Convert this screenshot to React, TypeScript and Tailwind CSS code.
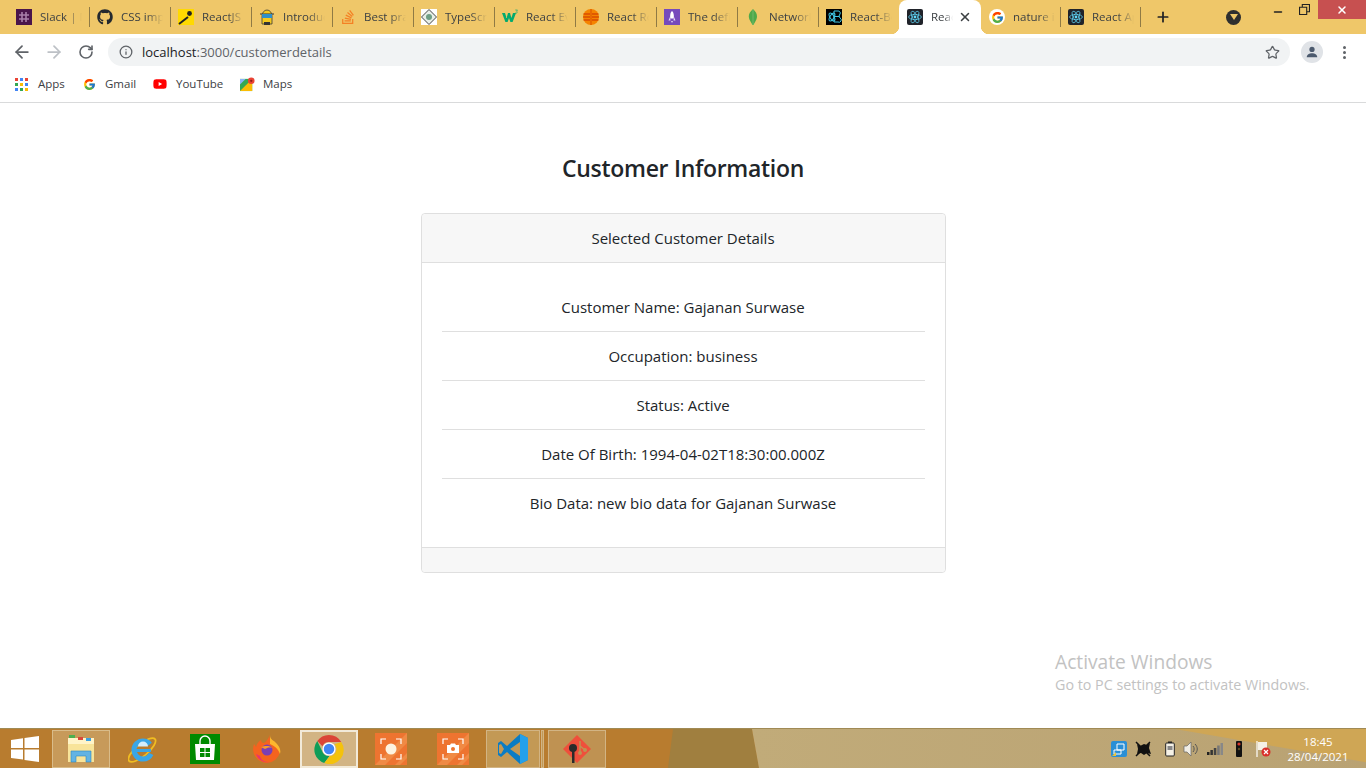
import { ReactNode } from "react";
import { FaGithub, FaStackOverflow, FaYoutube } from "react-icons/fa";
import { FcGoogle } from "react-icons/fc";
import { X, Plus, ArrowLeft, ArrowRight, RotateCw, Info, Star, Minus } from "lucide-react";

const ReactFav = () => (
  <svg viewBox="0 0 16 16" className="h-4 w-4">
    <rect width="16" height="16" rx="2" fill="#20232a" />
    <circle cx="8" cy="8" r="1.4" fill="#61dafb" />
    <g fill="none" stroke="#61dafb" strokeWidth="0.7">
      <ellipse cx="8" cy="8" rx="6.4" ry="2.6" />
      <ellipse cx="8" cy="8" rx="6.4" ry="2.6" transform="rotate(60 8 8)" />
      <ellipse cx="8" cy="8" rx="6.4" ry="2.6" transform="rotate(120 8 8)" />
    </g>
  </svg>
);

function GoogleFav() {
  return (
    <span className="flex h-4 w-4 items-center justify-center rounded-full bg-white">
      <FcGoogle className="h-[13px] w-[13px]" />
    </span>
  );
}

const tabs: { title: string; icon: ReactNode }[] = [
  {
    title: "Slack | New message",
    icon: (
      <svg viewBox="0 0 16 16" className="h-4 w-4">
        <rect width="16" height="16" fill="#4a154b" />
        <path d="M6 3v10M10 3v10M3 6h10M3 10h10" stroke="#a97fab" strokeWidth="1.6" />
      </svg>
    ),
  },
  { title: "CSS import", icon: <FaGithub className="h-4 w-4 text-[#24292e]" /> },
  {
    title: "ReactJS tutorial",
    icon: (
      <svg viewBox="0 0 16 16" className="h-4 w-4">
        <rect width="16" height="16" fill="#ffd900" />
        <path d="M1 15l9-7" stroke="#222" strokeWidth="2" />
        <circle cx="11.5" cy="4.5" r="2.4" fill="#222" />
      </svg>
    ),
  },
  {
    title: "Introduction",
    icon: (
      <svg viewBox="0 0 16 16" className="h-4 w-4">
        <path d="M3 7a5 6 0 0 1 10 0v8H3z" fill="#f3c81f" stroke="#3a3a3a" strokeWidth="0.8" />
        <path d="M1 5h14" stroke="#333" strokeWidth="1" />
        <rect x="3" y="5" width="10" height="4" fill="#2f8fc9" />
        <path d="M5 13h6v3H5z" fill="#333" />
      </svg>
    ),
  },
  { title: "Best practices", icon: <FaStackOverflow className="h-4 w-4 text-[#f48024]" /> },
  {
    title: "TypeScript",
    icon: (
      <svg viewBox="0 0 16 16" className="h-4 w-4">
        <rect width="16" height="16" fill="#fff" />
        <path d="M8 .5 15.500 8 8 15.500.5 8z" fill="#e8efe8" stroke="#444" strokeWidth="1" />
        <circle cx="8" cy="8" r="3" fill="#6f9f85" />
      </svg>
    ),
  },
  {
    title: "React Events",
    icon: (
      <svg viewBox="0 0 16 16" className="h-4 w-4">
        <path d="M0 4h3l1.600 5L6 4h2l1.400 5L11 4h3l-3.400 9H8.400L7 9l-1.400 4H3.400z" fill="#04aa6d" />
        <path d="M13.200 1h2.300l-1 1.300a.9.9 0 1 1-1 1.300" fill="none" stroke="#04aa6d" strokeWidth="0.6" />
      </svg>
    ),
  },
  {
    title: "React Router",
    icon: (
      <svg viewBox="0 0 16 16" className="h-4 w-4">
        <circle cx="8" cy="8" r="8" fill="#f58400" />
        <path d="M0.600 5h14.800M0.200 8h15.600M0.600 11h14.800" stroke="#d94c00" strokeWidth="1.400" />
        <path d="M8 0v16" stroke="#e86a00" strokeWidth="2" />
      </svg>
    ),
  },
  {
    title: "The definitive",
    icon: (
      <svg viewBox="0 0 16 16" className="h-4 w-4">
        <rect width="16" height="16" fill="#764abc" />
        <path d="M8 2c1.800 1.500 2 4 1.800 7.500H6.200C6 6 6.200 3.500 8 2z" fill="#fff" />
        <path d="M6 8 4.500 11.500H6.500M10 8l1.500 3.500H9.500M7 12h2l-1 2z" fill="#e6dcf5" />
      </svg>
    ),
  },
  {
    title: "Network",
    icon: (
      <svg viewBox="0 0 16 16" className="h-4 w-4">
        <path d="M8 0c2.800 2.600 4.200 5 4 8-.2 3.400-2.600 5.400-3.500 8h-1C6.600 13.400 4 11.400 3.800 8 3.600 5 5.200 2.600 8 0z" fill="#4fa94a" />
        <path d="M8 1v15" stroke="#8bc27f" strokeWidth="0.6" />
      </svg>
    ),
  },
  {
    title: "React-Bootstrap",
    icon: (
      <svg viewBox="0 0 16 16" className="h-4 w-4">
        <rect width="16" height="16" fill="#000" />
        <g fill="none" stroke="#41c7e6" strokeWidth="1">
          <ellipse cx="6" cy="8" rx="4.500" ry="2" transform="rotate(60 6 8)" />
          <ellipse cx="6" cy="8" rx="4.500" ry="2" transform="rotate(120 6 8)" />
          <path d="M8 2h4a2 2 0 0 1 2 3l-1 2 1 2a2 2 0 0 1-2 4H8zM8 7.500h5" />
        </g>
      </svg>
    ),
  },
];

const Tab = ({ title, icon, width = "w-[81px]" }: { title: string; icon: ReactNode; width?: string }) => (
  <div className={`flex h-[34px] shrink-0 items-center pl-[8px] ${width}`}>
    {icon}
    <span className="ml-[8px] w-[42px] overflow-hidden whitespace-nowrap text-[11.5px] text-[#3c4043] [mask-image:linear-gradient(to_right,black_60%,transparent)]">
      {title}
    </span>
    <span className="ml-auto mr-[-1px] h-[20px] w-px bg-[#8f7a45]" />
  </div>
);

const Chrome = ({ size }: { size: string }) => (
  <svg viewBox="0 0 32 32" className={size}>
    <path d="M16 1a15 15 0 0 1 13 7.500H16a7.500 7.500 0 0 0-7 4.500L3.500 7.500A15 15 0 0 1 16 1z" fill="#db4437" />
    <path d="M3.500 7.500 9.500 20a7.500 7.500 0 0 0 7 3.500L11 31A15 15 0 0 1 3.500 7.500z" fill="#0f9d58" />
    <path d="M29 8.500A15 15 0 0 1 11 31l6-7.500a7.500 7.500 0 0 0 5-12.500L29 8.500z" fill="#f4c20d" />
    <circle cx="16" cy="16" r="7" fill="#fff" />
    <circle cx="16" cy="16" r="5.600" fill="#4285f4" />
  </svg>
);

const OrangeTile = ({ children }: { children: ReactNode }) => (
  <svg viewBox="0 0 32 32" className="h-[32px] w-[32px]">
    <rect width="32" height="32" fill="#ee7430" />
    <path d="M0 32 32 0v10L10 32zM20 32 32 20v5l-7 7z" fill="#f08a44" />
    <path d="M6 11V6h5M21 6h5v5M26 21v5h-5M11 26H6v-5" fill="none" stroke="#fff" strokeWidth="1.200" />
    {children}
  </svg>
);

const rows = [
  "Customer Name: Gajanan Surwase",
  "Occupation: business",
  "Status: Active",
  "Date Of Birth: 1994-04-02T18:30:00.000Z",
  "Bio Data: new bio data for Gajanan Surwase",
];

const TaskSlot = ({ children, className = "" }: { children: ReactNode; className?: string }) => (
  <div className={`flex h-full shrink-0 items-center justify-center ${className}`}>{children}</div>
);

export default function App() {
  return (
    <div
      className="relative flex h-[768px] w-[1366px] flex-col overflow-hidden bg-white text-[#212529]"
      style={{ fontFamily: '"Open Sans", "Noto Sans", sans-serif' }}
    >
      {/* tab strip */}
      <div className="flex h-[34px] shrink-0 items-center bg-[#efc769] pl-[8px]">
        {tabs.map((t) => (
          <Tab key={t.title} title={t.title} icon={t.icon} />
        ))}
        <div className="relative flex h-[34px] w-[82px] shrink-0 items-center rounded-t-[8px] bg-white pl-[8px]">
          <span className="absolute bottom-0 left-[-8px] h-[8px] w-[8px] bg-[radial-gradient(circle_at_0_0,#efc769_8px,#ffffff_8.500px)]" />
          <span className="absolute bottom-0 right-[-8px] h-[8px] w-[8px] bg-[radial-gradient(circle_at_100%_0,#efc769_8px,#ffffff_8.500px)]" />
          <ReactFav />
          <span className="ml-[8px] w-[22px] overflow-hidden whitespace-nowrap text-[11.5px] text-[#3c4043] [mask-image:linear-gradient(to_right,black_60%,transparent)]">
            React App
          </span>
          <X className="ml-[5px] h-[14px] w-[14px] text-[#3c4043]" strokeWidth={2.6} />
        </div>
        <Tab title="nature images" icon={<GoogleFav />} width="w-[79px]" />
        <Tab title="React App" icon={<ReactFav />} width="w-[80px]" />
        <Plus className="ml-[15px] h-[16px] w-[16px] text-[#202124]" strokeWidth={2.6} />
        <span className="ml-[55px] flex h-[15px] w-[15px] items-center justify-center rounded-full bg-[#2f2f2f]">
          <svg viewBox="0 0 8 6" className="h-[6px] w-[8px]">
            <path d="M0 0h8L4 6z" fill="#efc769" />
          </svg>
        </span>
        <div className="ml-auto flex h-[34px] items-start self-start">
          <Minus className="mt-[6px] mr-[15px] h-[12px] w-[12px] text-[#222]" strokeWidth={3} />
          <svg viewBox="0 0 10 10" className="mt-[4px] mr-[8px] h-[11px] w-[11px]">
            <path d="M.5 3h6.500v6.500H.5zM3 3V.5h6.500V7H7" fill="none" stroke="#222" strokeWidth="1" />
          </svg>
          <div className="flex h-[19px] w-[48px] items-center justify-center bg-[#c75050]">
            <X className="h-[12px] w-[12px] text-white" strokeWidth={3} />
          </div>
        </div>
      </div>

      {/* toolbar */}
      <div className="flex h-[34px] shrink-0 items-center bg-white pl-[12px] pt-[2px]">
        <ArrowLeft className="h-[20px] w-[20px] text-[#5f6368]" strokeWidth={2.1} />
        <ArrowRight className="ml-[12px] h-[20px] w-[20px] text-[#bdc1c6]" strokeWidth={2.1} />
        <RotateCw className="ml-[14px] h-[16px] w-[16px] text-[#5f6368]" strokeWidth={2.4} />
        <div className="ml-[14px] flex h-[28px] w-[1182px] items-center rounded-full bg-[#f1f3f4] pl-[11px] pr-[10px]">
          <Info className="h-[14px] w-[14px] text-[#5f6368]" strokeWidth={2.2} />
          <span className="ml-[9px] mt-[1px] text-[13px] text-[#5f6368]">
            <span className="text-[#202124]">localhost</span>:3000/customerdetails
          </span>
          <Star className="ml-auto h-[15px] w-[15px] text-[#5f6368]" strokeWidth={2} />
        </div>
        <span className="ml-[11px] flex h-[22px] w-[22px] items-center justify-center rounded-full bg-[#e0e3e7]">
          <svg viewBox="0 0 16 16" className="h-[14px] w-[14px]">
            <circle cx="8" cy="5" r="3" fill="#4c5a6e" />
            <path d="M2 14c0-3 3-4.500 6-4.500s6 1.500 6 4.500z" fill="#4c5a6e" />
          </svg>
        </span>
        <span className="ml-[20px] flex flex-col gap-[2px]">
          <span className="h-[3px] w-[3px] rounded-full bg-[#5f6368]" />
          <span className="h-[3px] w-[3px] rounded-full bg-[#5f6368]" />
          <span className="h-[3px] w-[3px] rounded-full bg-[#5f6368]" />
        </span>
      </div>

      {/* bookmarks bar */}
      <div className="flex h-[35px] shrink-0 items-center border-b border-[#d9dadb] bg-white pb-[2px] pl-[15px] text-[11.5px] text-[#3c4043]">
        <svg viewBox="0 0 13 13" className="h-[13px] w-[13px]">
          <rect x="0" y="0" width="3" height="3" fill="#ea4335" />
          <rect x="5" y="0" width="3" height="3" fill="#4285f4" />
          <rect x="10" y="0" width="3" height="3" fill="#ea4335" />
          <rect x="0" y="5" width="3" height="3" fill="#34a853" />
          <rect x="5" y="5" width="3" height="3" fill="#fbbc05" />
          <rect x="10" y="5" width="3" height="3" fill="#4285f4" />
          <rect x="0" y="10" width="3" height="3" fill="#4285f4" />
          <rect x="5" y="10" width="3" height="3" fill="#34a853" />
          <rect x="10" y="10" width="3" height="3" fill="#fbbc05" />
        </svg>
        <span className="ml-[10px] w-[27px]">Apps</span>
        <FcGoogle className="ml-[18px] h-[13px] w-[13px]" />
        <span className="ml-[9px] w-[31px]">Gmail</span>
        <FaYoutube className="ml-[17px] h-[14px] w-[14px] text-[#f00]" />
        <span className="ml-[9px] w-[48px]">YouTube</span>
        <svg viewBox="0 0 16 16" className="ml-[16px] h-[15px] w-[15px]">
          <rect x="0" y="2" width="13" height="13" fill="#34a853" />
          <path d="M0 15 13 2v13z" fill="#fbbc05" />
          <path d="M0 2h6L0 8z" fill="#8ab4f8" />
          <circle cx="12" cy="4" r="3.500" fill="#ea4335" />
          <circle cx="12" cy="4" r="1.200" fill="#8c1d18" />
        </svg>
        <span className="ml-[8px]">Maps</span>
      </div>

      {/* page */}
      <main className="flex flex-1 flex-col items-center pt-[47px]">
        <h1 className="text-[23px] font-semibold leading-[36px] tracking-[-0.3px]">Customer Information</h1>
        <div className="mt-[27px] flex w-[525px] flex-col rounded-[4px] border border-[#dfdfdf] text-center text-[15px]">
          <div className="h-[49px] rounded-t-[4px] border-b border-[#dfdfdf] bg-[#f7f7f7] leading-[48px]">
            Selected Customer Details
          </div>
          <div className="px-[20px] pt-[20px] pb-[19px]">
            {rows.map((r, i) => (
              <div key={r} className={`h-[49px] leading-[48px] ${i < rows.length - 1 ? "border-b border-[#dfdfdf]" : ""}`}>
                {r}
              </div>
            ))}
          </div>
          <div className="h-[25px] rounded-b-[4px] border-t border-[#dfdfdf] bg-[#f7f7f7]" />
        </div>
      </main>

      {/* watermark */}
      <div className="pointer-events-none absolute left-[1055px] top-[649px] text-[#c2c2c2]">
        <div className="text-[19.2px] leading-[26px]">Activate Windows</div>
        <div className="text-[14.3px] leading-[20px]">Go to PC settings to activate Windows.</div>
      </div>

      {/* taskbar */}
      <div className="relative flex h-[40px] shrink-0 border-t border-[#a08a55] bg-[#b87c2f]">
        <svg viewBox="0 0 1366 40" preserveAspectRatio="none" className="absolute inset-0 h-full w-full">
          <defs>
            <linearGradient id="tan" x1="0" x2="1" y1="0" y2="0">
              <stop offset="0" stopColor="#c1ab79" />
              <stop offset="1" stopColor="#b9a273" />
            </linearGradient>
          </defs>
          <rect width="1366" height="40" fill="#b87c2f" />
          <path d="M673 0H752L759 40H668z" fill="#a07f3f" />
          <path d="M752 0H1366V40H759z" fill="url(#tan)" />
          <path d="M1175 0H1366V34z" fill="#cfa655" />
        </svg>
        <div className="relative flex h-full w-full items-center">
          <TaskSlot className="w-[50px]">
            <svg viewBox="0 0 28 26" className="h-[26px] w-[28px]">
              <path d="M0 4 12 2.300V12H0zM13.500 2 28 0v12H13.500zM0 13.500h12v10L0 22zM13.500 13.500H28V26L13.500 24z" fill="#fff" />
            </svg>
          </TaskSlot>
          <TaskSlot className="w-[62px]">
            <div className="flex h-[38px] w-[58px] items-center justify-center border border-[#d9bc8a] bg-[#c79a5a]">
              <svg viewBox="0 0 30 30" className="h-[30px] w-[30px]">
                <path d="M2 4h26v22H2z" fill="#f0d27a" />
                <path d="M2 4h26v6H2z" fill="#fff4c8" />
                <rect x="3" y="1" width="6" height="3" fill="#4caf50" />
                <rect x="12" y="3" width="5" height="3" fill="#d9483b" />
                <rect x="20" y="4" width="5" height="3" fill="#3ba0e0" />
                <path d="M2 10h26v18H2z" fill="#f8e49a" />
                <path d="M5 28V17h20v11h-5v-6H10v6z" fill="#62b3e3" stroke="#2e86c1" strokeWidth="0.600" />
              </svg>
            </div>
          </TaskSlot>
          <TaskSlot className="w-[62px]">
            <svg viewBox="0 0 30 30" className="h-[30px] w-[30px]">
              <ellipse cx="14" cy="16" rx="17" ry="6" transform="rotate(-40 14 16)" fill="none" stroke="#f0bd21" strokeWidth="1.800" />
              <circle cx="15" cy="16" r="9" fill="none" stroke="#3aa6e6" strokeWidth="5" strokeDasharray="46 12" strokeDashoffset="-4" />
              <path d="M8 15h15v3H8z" fill="#3aa6e6" />
              <path d="M10 12.500h10a5 5 0 0 0-10 0z" fill="#d5eefb" />
            </svg>
          </TaskSlot>
          <TaskSlot className="w-[62px]">
            <svg viewBox="0 0 30 30" className="h-[30px] w-[30px]">
              <rect width="30" height="30" fill="#008a00" />
              <path d="M5 10h20l-1 16H6z" fill="#fff" />
              <path d="M10 10V7a5 5 0 0 1 10 0v3" fill="none" stroke="#fff" strokeWidth="1.400" />
              <path d="M10 14h4.500v4H10zM15.500 14H20v4h-4.500zM10 19h4.500v4H10zM15.500 19H20v4h-4.500z" fill="#008a00" />
            </svg>
          </TaskSlot>
          <TaskSlot className="w-[62px]">
            <svg viewBox="0 0 30 30" className="h-[32px] w-[30px]">
              <path d="M15 29A14 14 0 0 1 2 10c1 1 1.500 2 2 3 1-4 3-6 5-7 0 2 1 3 3 3 2-1 4-4 6-8-1 4 0 6 4 8 4 2 6 6 6 9A14 14 0 0 1 15 29z" fill="#f5631f" />
              <path d="M18 1c0 5 4 5 7 9 3 3 4 7 3 10-2-6-6-8-10-10 0-3 0-6 0-9z" fill="#fdb72d" />
              <path d="M4 20c2 6 8 9 13 8-5 0-8-2-9-6z" fill="#e8336e" />
              <circle cx="15" cy="16" r="5.500" fill="#7b3fb5" />
              <path d="M9 13c3-1 9-2 11 1-3-1-5 0-7 1z" fill="#f99b28" />
            </svg>
          </TaskSlot>
          <TaskSlot className="w-[62px]">
            <div className="flex h-[38px] w-[58px] items-center justify-center border-2 border-[#f2ead9] bg-[#d2b484]">
              <Chrome size="h-[30px] w-[30px]" />
            </div>
          </TaskSlot>
          <TaskSlot className="w-[62px]">
            <OrangeTile>
              <circle cx="16" cy="16" r="5.500" fill="#fdf3e0" />
            </OrangeTile>
          </TaskSlot>
          <TaskSlot className="w-[62px]">
            <OrangeTile>
              <path d="M10 12h3l1-1.500h4l1 1.500h3v8H10z" fill="#fff" />
              <circle cx="16" cy="16" r="2" fill="#ee7430" />
            </OrangeTile>
          </TaskSlot>
          <TaskSlot className="ml-[2px] w-[54px]">
            <div className="flex h-[38px] w-[54px] items-center justify-center border border-[#d2b484] bg-[#c39955]">
              <svg viewBox="0 0 32 32" className="h-[32px] w-[32px]">
                <path d="M23 1 31 5v22l-8 4-13-12-6 5-3-2V10l3-2 6 5z" fill="#0a7cc4" />
                <path d="M23 1 31 5v22l-8 4z" fill="#24a0ea" />
                <path d="M23 9 13 16l10 7z" fill="#c39955" />
                <path d="M4 11l3 5-3 5-2-1v-8z" fill="#c39955" />
              </svg>
            </div>
          </TaskSlot>
          <div className="ml-[1px] h-[38px] w-[3px] shrink-0 border border-[#d2b484] bg-[#c39955]" />
          <TaskSlot className="ml-[4px] w-[58px]">
            <div className="flex h-[38px] w-[58px] items-center justify-center border border-[#d2b484] bg-[#bf9252]">
              <svg viewBox="0 0 32 32" className="h-[32px] w-[32px]">
                <path d="M16 2 30 16 16 30 2 16z" fill="#ef4f3b" />
                <path d="M19 8v12M19 13l5 4" stroke="#bf9252" strokeWidth="1.500" />
                <circle cx="19" cy="20" r="2" fill="#bf9252" />
                <circle cx="24" cy="17" r="2" fill="#bf9252" />
                <circle cx="12" cy="15" r="4" fill="#2b2b2b" />
                <path d="M11 17h2.500v13H11z" fill="#2b2b2b" />
              </svg>
            </div>
          </TaskSlot>

          {/* tray */}
          <div className="ml-[505px] flex h-full shrink-0 items-center">
            <svg viewBox="0 0 16 16" className="h-[16px] w-[16px]">
              <rect width="16" height="16" rx="2" fill="#2a8fd6" />
              <path d="M6 3h7v6H6zM3 9h7v4H3z" fill="none" stroke="#fff" strokeWidth="1" />
              <path d="M1 15l4-4v4z" fill="#e8c23a" />
            </svg>
            <svg viewBox="0 0 16 16" className="ml-[8px] h-[16px] w-[16px]">
              <path d="M2 3 5 5l4-2 3 1 3-2-1 5 2 6-4-1-3 2-3-2-4 1 1-5z" fill="#111" />
              <path d="M1 1l14 14M15 1 1 15" stroke="#111" strokeWidth="1.500" />
            </svg>
            <svg viewBox="0 0 10 16" className="ml-[14px] h-[16px] w-[10px]">
              <rect x=".7" y="2" width="8.600" height="13" rx="1" fill="#f5f1e6" stroke="#222" strokeWidth="1" />
              <rect x="3" y=".5" width="4" height="1.500" fill="#222" />
              <rect x="2.500" y="5" width="5" height="4" fill="#888" />
            </svg>
            <svg viewBox="0 0 16 16" className="ml-[8px] h-[16px] w-[16px]">
              <path d="M1 5h3l4-4v14l-4-4H1z" fill="#f0ede4" stroke="#666" strokeWidth="0.700" />
              <path d="M10 5c1.500 1.500 1.500 4.500 0 6M12 3c3 3 3 7 0 10" fill="none" stroke="#555" strokeWidth="1" />
            </svg>
            <svg viewBox="0 0 16 12" className="ml-[8px] h-[12px] w-[16px]">
              <rect x="0" y="9" width="2.500" height="3" fill="#222" />
              <rect x="3.400" y="7" width="2.500" height="5" fill="#333" />
              <rect x="6.800" y="5" width="2.500" height="7" fill="#444" />
              <rect x="10.200" y="2.500" width="2.500" height="9.500" fill="#777" />
              <rect x="13.500" y="0" width="2.500" height="12" fill="#888" />
            </svg>
            <svg viewBox="0 0 6 16" className="ml-[13px] h-[16px] w-[6px]">
              <rect width="6" height="16" rx="1" fill="#111" />
              <circle cx="3" cy="3" r="1.600" fill="#d9362b" />
              <circle cx="3" cy="8" r="1.200" fill="#5a4a20" />
            </svg>
            <svg viewBox="0 0 16 16" className="ml-[13px] h-[16px] w-[16px]">
              <path d="M2 0v16" stroke="#fff" strokeWidth="1.200" />
              <path d="M3 1h9v8H3z" fill="#f5f0e6" />
              <circle cx="11" cy="11" r="4.500" fill="#d9302b" />
              <path d="M9 9l4 4M13 9l-4 4" stroke="#fff" strokeWidth="1.200" />
            </svg>
            <div className="ml-[16px] w-[62px] text-center text-[11.5px] leading-[15px] text-white">
              <div>18:45</div>
              <div>28/04/2021</div>
            </div>
          </div>
        </div>
      </div>
    </div>
  );
}
